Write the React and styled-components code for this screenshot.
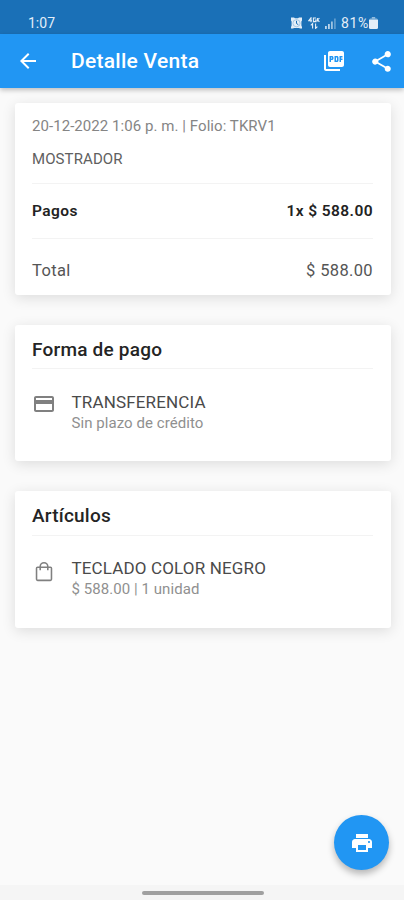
import React from "react";
import styled, { createGlobalStyle } from "styled-components";
import { MdArrowBack, MdPictureAsPdf, MdShare, MdPrint, MdOutlineCreditCard } from "react-icons/md";

const GlobalStyle = createGlobalStyle`
  * { box-sizing: border-box; }
  html, body { margin: 0; padding: 0; background: #fafafa; }
  body { font-family: Roboto, "Liberation Sans", sans-serif; }
`;

const Screen = styled.div`
  position: relative;
  display: flex;
  flex-direction: column;
  width: 404px;
  height: 900px;
  overflow: hidden;
  background: #fafafa;
`;

const StatusBar = styled.div`
  flex: none;
  display: flex;
  align-items: flex-end;
  justify-content: space-between;
  height: 34px;
  padding: 0 26px 3px 28px;
  background: #1a70b7;
  color: #e3eef8;
`;

const StatusText = styled.span`
  font-size: 14px;
  line-height: 16px;
  letter-spacing: ${(p) => p.$spacing || "0"};
`;

const StatusIcons = styled.div`
  display: flex;
  align-items: center;
`;

const StatusSvg = styled.svg`
  display: block;
  margin-right: ${(p) => p.$gap || 0}px;
`;

const AppBar = styled.header`
  flex: none;
  z-index: 1;
  display: flex;
  align-items: center;
  height: 54px;
  padding: 0 10px 0 16px;
  background: #2196f3;
  color: #fff;
  box-shadow: 0 2px 5px rgba(0, 0, 0, 0.25);
  svg { display: block; }
`;

const Title = styled.h1`
  flex: 1;
  margin: 0 0 0 31px;
  font-size: 21px;
  line-height: 26px;
  font-weight: 500;
  letter-spacing: 0.27px;
`;

const Actions = styled.div`
  display: flex;
  align-items: center;
  gap: 23px;
`;

const Content = styled.main`
  flex: 1;
  display: flex;
  flex-direction: column;
  gap: 30px;
  padding: 15px 13px 0 15px;
`;

const Card = styled.section`
  height: ${(p) => p.$height}px;
  padding: 0 18px 0 17px;
  border-radius: 3px;
  background: #fff;
  box-shadow: 0 3px 14px rgba(0, 0, 0, 0.12);
`;

const Meta = styled.div`
  padding-top: 14px;
  font-size: 15px;
  line-height: 18px;
  color: #858585;
  letter-spacing: 0.06px;
`;

const Customer = styled.div`
  height: 49px;
  padding-top: 15px;
  border-bottom: 1px solid #f3f3f3;
  font-size: 15px;
  line-height: 18px;
  color: #606060;
  letter-spacing: 0.1px;
`;

const AmountRow = styled.div`
  display: flex;
  align-items: center;
  justify-content: space-between;
  height: ${(p) => (p.$strong ? 55 : 62)}px;
  border-bottom: ${(p) => (p.$strong ? "1px solid #f3f3f3" : "none")};
  font-size: ${(p) => (p.$strong ? 15.5 : 16.5)}px;
  font-weight: ${(p) => (p.$strong ? 600 : 400)};
  color: ${(p) => (p.$strong ? "#222" : "#555")};
  letter-spacing: ${(p) => (p.$strong ? 0.42 : 0.35)}px;
`;

const CardTitle = styled.h2`
  height: ${(p) => p.$height || 44}px;
  margin: 0;
  padding-top: 14px;
  border-bottom: 1px solid #f3f3f3;
  font-size: 19px;
  line-height: 22px;
  font-weight: 500;
  color: #242424;
  letter-spacing: 0.22px;
`;

const Item = styled.div`
  display: grid;
  grid-template-columns: 23px 1fr;
  column-gap: 16.5px;
  padding-top: ${(p) => p.$top}px;
  color: #808080;
`;

const ItemIcon = styled.div`
  display: flex;
  align-items: ${(p) => (p.$low ? "flex-end" : "flex-start")};
  justify-content: center;
  height: 25px;
  svg { display: block; flex: none; }
`;

const ItemName = styled.div`
  font-size: 17px;
  line-height: 21px;
  color: #4a4a4a;
  letter-spacing: 0.15px;
`;

const ItemNote = styled.div`
  font-size: 15px;
  line-height: 20px;
  color: #909090;
  letter-spacing: 0.06px;
`;

const PrintButton = styled.button`
  position: absolute;
  right: 15px;
  bottom: 30px;
  display: flex;
  align-items: center;
  justify-content: center;
  width: 55px;
  height: 55px;
  padding: 0;
  border: 0;
  border-radius: 50%;
  background: #2196f3;
  color: #fff;
  box-shadow: 0 4px 7px rgba(0, 0, 0, 0.28);
`;

const NavigationBar = styled.footer`
  flex: none;
  display: flex;
  justify-content: center;
  height: 15px;
  padding-top: 6px;
  background: #f5f5f5;
`;

const HomeHandle = styled.div`
  width: 122px;
  height: 4px;
  margin-left: 1px;
  border-radius: 2px;
  background: #a0a0a0;
`;

function AlarmIcon() {
  return (
    <StatusSvg $gap={6} width="11" height="12" viewBox="0 0 11 12">
      <path d="M0 .5h3l1 .8h3l1-.8h3v3l-.6 1v4l.6 1.500v1.500H9l-1-.5H3l-1 .5H0V10l.6-1.500v-4L0 3.500z" fill="currentColor" />
      <path d="M5.500 3.800v2.700l1.800 1.200" fill="none" stroke="#1a70b7" strokeWidth="1" />
      <circle cx="5.500" cy="6.200" r="3.600" fill="none" stroke="#1a70b7" strokeWidth=".3" />
    </StatusSvg>
  );
}

function DataIcon() {
  return (
    <StatusSvg $gap={5} width="12" height="12" viewBox="0 0 12 12" fill="none" stroke="currentColor" strokeWidth="1.100">
      <path d="M3 5.200V.8L.6 3.800h3.400M8 1H5.400v3.600H8V3H6.800M9.400 1v3.600M11.400 1L9.600 3l1.800 1.800M4.600 11.600V6.600L2.800 8.400M7.600 6.400v5l1.800-1.800" />
    </StatusSvg>
  );
}

function SignalIcon() {
  return (
    <StatusSvg $gap={5} width="11" height="11" viewBox="0 0 11 11" fill="currentColor">
      <path d="M0 8h1.800v3H0zM3 6h1.800v5H3z" opacity=".8" />
      <path d="M6 3.500h1.800V11H6z" opacity=".65" />
      <path d="M9 .5h1.800V11H9z" opacity=".35" />
    </StatusSvg>
  );
}

function BatteryIcon() {
  return (
    <StatusSvg width="9" height="12" viewBox="0 0 9 12" fill="currentColor">
      <path d="M1.500 1.500h6q1.500 0 1.500 1.500H0q0-1.500 1.500-1.500" opacity=".6" />
      <path d="M2.800 0h3.400v1.500H2.800z" opacity=".6" />
      <path d="M0 3h9v7.500q0 1.500-1.500 1.500h-6Q0 12 0 10.500z" />
    </StatusSvg>
  );
}

function BagIcon() {
  return (
    <svg width="22" height="22" viewBox="0 0 24 24" fill="currentColor">
      <path d="M12 1a5 5 0 0 0-5 5H5a2 2 0 0 0-2 2v12a2 2 0 0 0 2 2h14a2 2 0 0 0 2-2V8a2 2 0 0 0-2-2h-2a5 5 0 0 0-5-5m0 1.700A3.300 3.300 0 0 1 15.300 6H8.700A3.300 3.300 0 0 1 12 2.700M4.700 7.700H7V10h1.700V7.700h6.600V10H17V7.700h2.300v12.600H4.700z" />
    </svg>
  );
}

export default function App() {
  return (
    <>
      <GlobalStyle />
      <Screen>
        <StatusBar>
          <StatusText>1:07</StatusText>
          <StatusIcons>
            <AlarmIcon />
            <DataIcon />
            <SignalIcon />
            <StatusText $spacing="0.7px">81%</StatusText>
            <BatteryIcon />
          </StatusIcons>
        </StatusBar>
        <AppBar>
          <MdArrowBack size={24} />
          <Title>Detalle Venta</Title>
          <Actions>
            <MdPictureAsPdf size={24} />
            <MdShare size={25} />
          </Actions>
        </AppBar>
        <Content>
          <Card $height={192}>
            <Meta>20-12-2022 1:06 p. m. | Folio: TKRV1</Meta>
            <Customer>MOSTRADOR</Customer>
            <AmountRow $strong>
              <span>Pagos</span>
              <span>1x $ 588.00</span>
            </AmountRow>
            <AmountRow>
              <span>Total</span>
              <span>$ 588.00</span>
            </AmountRow>
          </Card>
          <Card $height={136}>
            <CardTitle>Forma de pago</CardTitle>
            <Item $top={23}>
              <ItemIcon><MdOutlineCreditCard size={24} /></ItemIcon>
              <div>
                <ItemName>TRANSFERENCIA</ItemName>
                <ItemNote>Sin plazo de crédito</ItemNote>
              </div>
            </Item>
          </Card>
          <Card $height={137}>
            <CardTitle $height={45}>Artículos</CardTitle>
            <Item $top={22}>
              <ItemIcon $low><BagIcon /></ItemIcon>
              <div>
                <ItemName>TECLADO COLOR NEGRO</ItemName>
                <ItemNote>$ 588.00 | 1 unidad</ItemNote>
              </div>
            </Item>
          </Card>
        </Content>
        <NavigationBar><HomeHandle /></NavigationBar>
        <PrintButton aria-label="Imprimir"><MdPrint size={24} /></PrintButton>
      </Screen>
    </>
  );
}
